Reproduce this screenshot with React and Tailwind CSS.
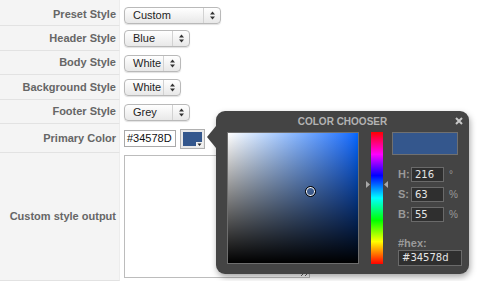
import React from "react";

const Arrows = () => (
  <svg width="5" height="9" viewBox="0 0 5 9">
    <path d="M0 3.5 L2.5 0.5 L5 3.5 Z" fill="#333" />
    <path d="M0 5.5 L2.5 8.5 L5 5.5 Z" fill="#333" />
  </svg>
);

const Select = ({ value, width }) => {
  return (
    <div
      className={`flex h-[17px] items-stretch rounded-[4px] border border-[#b9b9b9] bg-linear-to-b from-white to-[#e8e8e8] shadow-[0_1px_1px_rgba(0,0,0,0.12)] ${width}`}
    >
      <span className="flex-1 pl-[8px] text-[11px] leading-[15px] text-[#1e1e1e]">{value}</span>
      <span className="flex w-[17px] items-center justify-center border-l border-[#d2d2d2]">
        <Arrows />
      </span>
    </div>
  );
};

const Label = ({ children, className }) => (
  <div
    className={`flex w-[120px] shrink-0 items-center justify-end border-r border-b border-r-[#ececec] border-b-[#e2e2e2] bg-[#f4f4f4] pr-[3px] text-[11px] font-bold text-[#666] ${className}`}
  >
    {children}
  </div>
);

const FieldRow = ({ label, height, children }) => (
  <div className={`flex ${height}`}>
    <Label>{label}</Label>
    <div className="flex items-center pl-[4px]">{children}</div>
  </div>
);

const HsbRow = ({ name, value, unit }) => (
  <div className="flex h-[15px] items-center pl-[6px]">
    <span className="w-[13px] text-[11px] font-bold text-[#9a9a9a]">{name}</span>
    <div className="h-[15px] w-[33px] border border-[#6a6a6a] bg-[#2f2f2f] pl-[3px] font-['DejaVu_Sans',sans-serif] text-[10px] leading-[13px] text-[#e6e6e6]">
      {value}
    </div>
    <span className="ml-[5px] text-[10px] leading-[10px] text-[#9a9a9a]">{unit}</span>
  </div>
);

export default function App() {
  return (
    <div className="relative h-[281px] w-[480px] overflow-hidden bg-white font-['Liberation_Sans',Arial,sans-serif]">
      <div className="flex h-[26px]">
        <Label className="pt-[4px]">Preset Style</Label>
        <div className="flex items-center pt-[4px] pl-[4px]">
          <Select value="Custom" width="w-[97px]" />
        </div>
      </div>
      <FieldRow label="Header Style" height="h-[25px]">
        <Select value="Blue" width="w-[66px]" />
      </FieldRow>
      <FieldRow label="Body Style" height="h-[24px]">
        <Select value="White" width="w-[57px]" />
      </FieldRow>
      <FieldRow label="Background Style" height="h-[25px]">
        <Select value="White" width="w-[57px]" />
      </FieldRow>
      <FieldRow label="Footer Style" height="h-[24px]">
        <Select value="Grey" width="w-[66px]" />
      </FieldRow>
      <FieldRow label="Primary Color" height="h-[29px]">
        <div className="flex items-center">
          <div className="h-[17px] w-[52px] border border-[#a9a9a9] pl-[2px] text-[11px] leading-[15px] text-[#111]">
            #34578D
          </div>
          <div className="relative ml-[4px] h-[20px] w-[25px] border border-[#b0b0b0] bg-[#e9e9e9] p-[2px]">
            <div className="h-full w-full bg-[#34578d]" />
            <svg className="absolute right-[1px] bottom-[1px]" width="7" height="5" viewBox="0 0 7 5">
              <rect width="7" height="5" fill="#f2f2f2" />
              <path d="M1.5 1.5 L5.5 1.5 L3.5 4 Z" fill="#222" />
            </svg>
          </div>
        </div>
      </FieldRow>
      <div className="flex h-[128px]">
        <Label>Custom style output</Label>
        <div className="pt-[2px] pl-[4px]">
          <textarea
            readOnly
            className="block h-[123px] w-[186px] border border-[#bcbcbc] bg-white"
          />
        </div>
      </div>

      <div className="absolute top-[111px] left-[216px] h-[163px] w-[253px] rounded-[9px] bg-[#444444] shadow-[1px_3px_6px_rgba(0,0,0,0.35)]">
        <div className="absolute top-[15px] -left-[9px] h-0 w-0 border-y-[11px] border-r-[9px] border-y-transparent border-r-[#444444]" />
        <div className="relative h-[21px] text-center text-[10px] leading-[21px] font-bold text-[#b3b3b3]">
          COLOR CHOOSER
          <svg className="absolute top-[6px] right-[6px]" width="8" height="8" viewBox="0 0 8 8">
            <path d="M1 1 L7 7 M7 1 L1 7" stroke="#c8c8c8" strokeWidth="2" />
          </svg>
        </div>
        <div className="flex pl-[11px]">
          <div className="relative h-[132px] w-[132px] border border-[#6e6e6e] bg-linear-to-r from-white to-[#0066ff]">
            <div className="h-full w-full bg-linear-to-t from-black to-transparent" />
            <div className="absolute top-[53px] left-[77px] h-[11px] w-[11px] rounded-full border border-black shadow-[inset_0_0_0_1px_#fff]" />
          </div>
          <div className="relative ml-[12px] h-[132px] w-[12px] bg-[linear-gradient(to_bottom,#ff0000,#ff00ff_17%,#0000ff_33%,#00ffff_50%,#00ff00_67%,#ffff00_83%,#ff0000)]">
            <svg className="absolute top-[49px] -left-[5px]" width="4" height="7" viewBox="0 0 4 7">
              <path d="M0 0 L4 3.5 L0 7 Z" fill="#a8a8a8" />
            </svg>
            <svg className="absolute top-[49px] -right-[5px]" width="4" height="7" viewBox="0 0 4 7">
              <path d="M4 0 L0 3.5 L4 7 Z" fill="#a8a8a8" />
            </svg>
          </div>
          <div className="ml-[9px] flex w-[71px] flex-col">
            <div className="h-[23px] w-[66px] border border-[#707070] bg-[#34578d]" />
            <div className="mt-[12px] flex flex-col gap-[5px]">
              <HsbRow name="H:" value="216" unit="°" />
              <HsbRow name="S:" value="63" unit="%" />
              <HsbRow name="B:" value="55" unit="%" />
            </div>
            <div className="mt-[15px] pl-[6px] text-[11px] leading-[12px] font-bold text-[#9a9a9a]">#hex:</div>
            <div className="mt-[1px] ml-[6px] h-[16px] w-[64px] border border-[#6a6a6a] bg-[#2f2f2f] pl-[3px] font-['DejaVu_Sans',sans-serif] text-[10px] leading-[14px] text-[#e6e6e6]">
              #34578d
            </div>
          </div>
        </div>
      </div>
    </div>
  );
}
